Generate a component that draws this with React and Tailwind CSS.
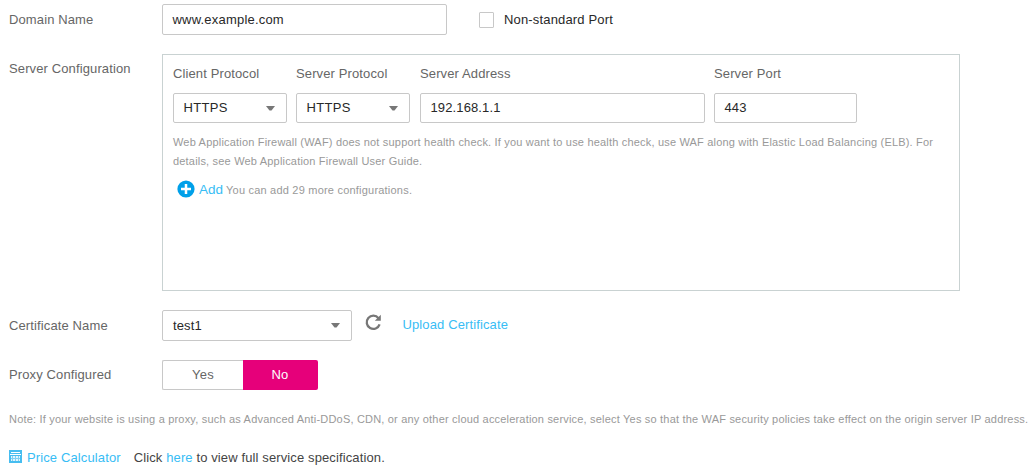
const Caret = () => (
  <svg width="9" height="5" viewBox="0 0 9 5" className="shrink-0" fill="#777777">
    <path d="M0 0h9L5.5 4.5h-2z" />
  </svg>
);

const box = "flex items-center rounded-[2px] border border-[#c8c8c8] bg-white text-[#282828]";

const Label = ({ children, className }) => (
  <div className={`w-[153px] shrink-0 whitespace-nowrap leading-4 ${className}`}>{children}</div>
);

const Field = ({ label, className, children }) => (
  <div className={className}>
    <div className="h-4 whitespace-nowrap leading-4">{label}</div>
    <div className={`${box} mt-[11px] h-[30px] justify-between pl-[9.5px] pr-[11px]`}>{children}</div>
  </div>
);

export default function App() {
  return (
    <div className="flex h-[468px] w-[1035px] flex-col overflow-hidden bg-white pl-[9px] pt-1 font-['Liberation_Sans',Arial,sans-serif] text-[13px] tracking-[0.12px] text-[#666666]">
      <div className="flex h-[31px]">
        <Label className="pt-2">Domain Name</Label>
        <div className={`${box} w-[285px] pl-[9.5px] tracking-[0.2px]`}>www.example.com</div>
        <div className="ml-8 mt-2 h-4 w-[15px] rounded-[1px] border border-[#c8c8c8]" />
        <div className="ml-2.5 pt-2 leading-4 tracking-[0.16px] text-[#282828]">Non-standard Port</div>
      </div>

      <div className="mt-[19px] flex h-[237px]">
        <Label className="pt-[7px]">Server Configuration</Label>
        <div className="w-[798px] border border-[#c9d2d2] pl-2.5 pt-[11px]">
          <div className="flex">
            <Field label="Client Protocol" className="w-[114px]"><span className="tracking-[0.3px]">HTTPS</span><Caret /></Field>
            <Field label="Server Protocol" className="ml-[9px] w-[114px]"><span className="tracking-[0.3px]">HTTPS</span><Caret /></Field>
            <Field label="Server Address" className="ml-2.5 w-[285px]">192.168.1.1</Field>
            <Field label="Server Port" className="ml-[9px] w-[143px]">443</Field>
          </div>
          <div className="mt-[10px] whitespace-nowrap text-[11px] leading-[19px] tracking-[0.187px] text-[#999999]">
            <p>Web Application Firewall (WAF) does not support health check. If you want to use health check, use WAF along with Elastic Load Balancing (ELB). For</p>
            <p>details, see Web Application Firewall User Guide.</p>
          </div>
          <div className="mt-[9px] flex h-[18px] items-center pl-1">
            <svg width="18" height="18" viewBox="0 0 18 18">
              <circle cx="9" cy="9" r="8.6" fill="#00a0e9" />
              <path d="M9 4v10M4 9h10" stroke="white" strokeWidth="2.5" />
            </svg>
            <a className="ml-1 pt-px text-[13.5px] leading-4 tracking-normal text-[#38bdf5]">Add</a>
            <span className="ml-[3px] pt-px text-[11px] leading-4 tracking-[0.21px] text-[#999999]">You can add 29 more configurations.</span>
          </div>
        </div>
      </div>

      <div className="mt-[19px] flex h-[31px]">
        <Label className="pt-2">Certificate Name</Label>
        <div className={`${box} w-[190px] justify-between pl-2.5 pr-[11px]`}><span>test1</span><Caret /></div>
        <svg className="ml-[13px] mt-1" width="17" height="17" viewBox="0 0 17 17">
          <path d="M13.5 4.2A6.6 6.6 0 1 0 14.6 10.4" fill="none" stroke="#777777" strokeWidth="2.3" />
          <path d="M15.8 0.8v6H9.8z" fill="#777777" />
        </svg>
        <a className="ml-[20.5px] pt-[7px] leading-4 text-[#38bdf5]">Upload Certificate</a>
      </div>

      <div className="mt-[19px] flex h-[30px]">
        <Label className="pt-[7px]">Proxy Configured</Label>
        <div className="flex w-[81px] items-center justify-center rounded-l-[2px] border border-r-0 border-[#c8c8c8] tracking-[0.3px]">Yes</div>
        <div className="flex w-[75px] items-center justify-center rounded-r-[2px] bg-[#e6007a] pr-px text-white">No</div>
      </div>

      <p className="mt-[21px] whitespace-nowrap text-[11px] leading-4 tracking-[0.192px] text-[#999999]">
        Note: If your website is using a proxy, such as Advanced Anti-DDoS, CDN, or any other cloud acceleration service, select Yes so that the WAF security policies take effect on the origin server IP address.
      </p>

      <div className="mt-[23px] flex h-4 whitespace-nowrap leading-4">
        <svg width="13" height="13" viewBox="0 0 13 13" shapeRendering="crispEdges">
          <path d="M0 0h13v13H0z" fill="#46bdf0" />
          <path d="M2 2h9v1H2zM1 4h11v1H1z" fill="white" />
          <path d="M2 6h9v5H2z" fill="#e2f5fd" />
          <path d="M3 6h1v5H3zM6 6h1v5H6zM9 6h1v5H9zM2 8h9v1H2z" fill="#7fd0f4" />
        </svg>
        <a className="ml-[5px] text-[#38bdf5]">Price Calculator</a>
        <span className="ml-[13px] text-[#444444]">Click <a className="text-[#38bdf5]">here</a> to view full service specification.</span>
      </div>
    </div>
  );
}
